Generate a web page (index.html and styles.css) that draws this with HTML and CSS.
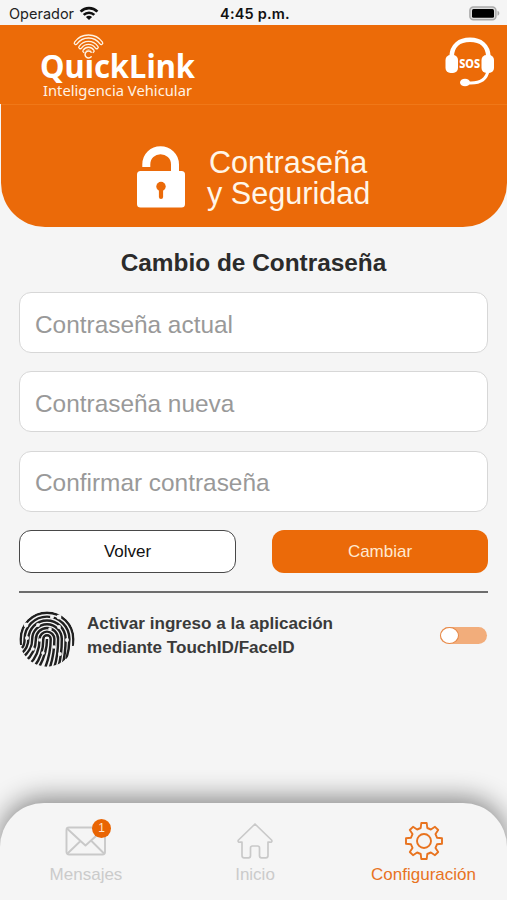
FILE: index.html
```html
<!DOCTYPE html>
<html lang="es">
<head>
<meta charset="utf-8">
<title>QuickLink</title>
<link rel="stylesheet" href="styles.css">
</head>
<body>
<div class="app">
  <div class="status">
    <div class="carrier"><span>Operador</span>
      <svg width="20" height="15" viewBox="0 0 20 15" fill="none" stroke="#111" stroke-width="2.7"><path d="M1.6 5.6C6.2 1 13.8 1 18.4 5.6M4.7 8.9c3-2.9 7.600-2.900 10.600 0"/><path d="M10 14 6.900 10.900c1.700-1.600 4.500-1.600 6.200 0z" fill="#111" stroke="none"/></svg>
    </div>
    <div class="time">4:45 p.m.</div>
    <svg class="battery" width="32" height="15" viewBox="0 0 32 15"><rect x=".9" y=".9" width="26" height="12.800" rx="3.500" fill="#ddd" stroke="#aaa" stroke-width="1.500"/><rect x="3" y="3" width="22" height="8.700" rx="1.500" fill="#000"/><path d="M28.500 4.800c2.400.8 2.400 4.200 0 5z" fill="#aaa"/></svg>
  </div>
  <header class="topbar">
    <svg class="logo" width="162" height="72" viewBox="0 0 162 72">
      <g fill="none" stroke-linecap="round">
        <path d="M36.800 12C43 3.300 56 3.300 62.200 12M41.300 16.200C45.500 10.500 53.500 10.500 57.700 16.200M45.400 20C47.500 17 51.500 17 53.600 20" stroke="#fff3e2" stroke-width="4.300"/>
        <path d="M36.800 12C43 3.300 56 3.300 62.200 12M41.300 16.200C45.500 10.500 53.500 10.500 57.700 16.200M45.400 20C47.500 17 51.500 17 53.600 20" stroke="#ec6b08" stroke-width="1.700"/>
        <circle cx="49.500" cy="23.500" r="4.600" fill="#ec6b08"/>
        <path d="M52.200 21.200a3.500 3.500 0 1 0 0 4.600" stroke="#fff3e2" stroke-width="1.500"/>
      </g>
      <text class="brand" x="1" y="47" textLength="155" lengthAdjust="spacingAndGlyphs">QuıckLink</text>
      <text class="tagline" x="4" y="64.500" textLength="149" lengthAdjust="spacingAndGlyphs">Inteligencia Vehicular</text>
    </svg>
    <svg class="sos" width="50" height="50" viewBox="0 0 50 50">
      <path d="M6.500 20C7 8 15 2.800 25 2.800S43 8 43.500 20" fill="none" stroke="#fff" stroke-width="4.600"/>
      <rect x=".5" y="18" width="12.500" height="18" rx="5" fill="#fff"/><rect x="36.500" y="18" width="12.500" height="18" rx="5" fill="#fff"/>
      <path d="M43 34c-1.500 8-8 12-17 12h-5" fill="none" stroke="#fff" stroke-width="3"/><ellipse cx="20" cy="45.500" rx="5" ry="3.800" fill="#fff"/>
      <text class="sos-text" x="14.200" y="30.500" textLength="21" lengthAdjust="spacingAndGlyphs">SOS</text>
    </svg>
  </header>
  <section class="hero">
    <svg width="48" height="62" viewBox="0 0 48 62">
      <path d="M9.300 21v-2.500C9.300 10 16 4.200 23.500 4.200S38 10 38 18.500V27" fill="none" stroke="#fff" stroke-width="8"/>
      <rect x="0" y="25" width="48" height="36.500" rx="3.500" fill="#fff"/>
      <circle cx="24" cy="40.500" r="4.700" fill="#eb6a09"/><path d="M24 41v10" stroke="#eb6a09" stroke-width="4.200" stroke-linecap="round"/>
    </svg>
    <h1><span>Contraseña</span><br>y Seguridad</h1>
  </section>
  <main>
    <h2>Cambio de Contraseña</h2>
    <div class="field">Contraseña actual</div>
    <div class="field">Contraseña nueva</div>
    <div class="field">Confirmar contraseña</div>
    <div class="buttons"><button class="btn back">Volver</button><button class="btn change">Cambiar</button></div>
    <div class="bio">
      <svg class="finger" width="56" height="56" viewBox="-28 -28 56 56">
        <defs><clipPath id="disc"><circle r="27.700"/></clipPath></defs>
        <g clip-path="url(#disc)" fill="none" stroke="#202020" stroke-width="2.450">
          <path d="M0 0C0 10-3 20-9 30"/>
          <path d="M-13 28C-6 19-3.700 10-3.700 0a3.700 3.700 0 0 1 7.400 0c0 12-2 20-6 30"/>
          <path d="M-18 26C-10 18-7.400 9-7.400 0a7.400 7.400 0 0 1 14.800 0c0 12-1.500 20-5 30"/>
          <path d="M-22 23C-13 15-11.100 8-11.100 0a11.100 11.100 0 0 1 22.200 0c0 12-1 20-4.300 30"/>
          <path d="M-25 19C-16 12-14.800 6-14.800 0a14.800 14.800 0 0 1 29.600 0c0 12-1 20-3.500 28"/>
          <path d="M-26 15C-19 9-18.600 4-18.600 0a18.600 18.600 0 0 1 37.200 0c0 10-1 18-3 26"/>
          <path d="M-25 9C-22.500 6-22.400 3-22.400 0a22.400 22.400 0 0 1 44.800 0c0 9-1 13-3 20"/>
          <path d="M-26.300 6V0a26.300 26.300 0 0 1 52.600 0v7"/>
        </g>
        <g fill="#f5f5f5"><circle cx="5" cy="-22" r="2"/><circle cx="12" cy="-22" r="2.400"/><circle cx="-21" cy="-14" r="2.400"/><circle cx="-9" cy="-14" r="1.900"/><circle cx="12" cy="-12" r="1.900"/><circle cx="3" cy="-10" r="1.800"/><circle cx="-20" cy="-1" r="2"/><circle cx="-7" cy="1" r="1.800"/><circle cx="20" cy="1" r="1.900"/><circle cx="7" cy="8" r="1.800"/><circle cx="-14" cy="10" r="1.800"/><circle cx="-4" cy="14" r="1.800"/><circle cx="13" cy="15" r="1.900"/></g>
      </svg>
      <p>Activar ingreso a la aplicación<br>mediante TouchID/FaceID</p>
      <div class="toggle"><i></i></div>
    </div>
  </main>
  <nav>
    <div class="tab">
      <div class="icon"><svg width="42" height="40" viewBox="0 0 42 40" fill="none" stroke="#c9c9c9" stroke-width="1.900" stroke-linejoin="round"><rect x="1.500" y="6.500" width="38.500" height="27" rx="2.500"/><path d="M2 7.500l13.500 12.500L20.500 24.500l5.500-5L39.500 7.500M2.500 32.500l13-12.500M39 32.500 26 19.500"/></svg><b class="badge">1</b></div>
      <span>Mensajes</span>
    </div>
    <div class="tab">
      <div class="icon"><svg width="42" height="40" viewBox="0 0 42 40" fill="none" stroke="#c9c9c9" stroke-width="1.700" stroke-linejoin="round"><path d="M21 3 4.500 19c-1 1.300.2 2.500 1.500 2.200h2V34.500q0 2.300 2 2.300h4.500q2 0 2-2V27q0-2 2-2h5q2 0 2 2v7.800q0 2 2 2H32q2 0 2-2.300V21.200h2c1.300.3 2.500-.9 1.500-2.200z"/></svg></div>
      <span>Inicio</span>
    </div>
    <div class="tab active">
      <div class="icon"><svg width="42" height="40" viewBox="-21 -20 42 40" fill="none" stroke="#e8731f" stroke-width="1.900" stroke-linejoin="round"><path d="M-3.300-13-2.700-18H2.700L3.300-13 6.900-11.500 11-14.200 14.200-11 11.500-6.900 13-3.300 18-2.700V2.700L13 3.300 11.500 6.900 14.200 11 11 14.200 6.900 11.500 3.300 13 2.700 18H-2.700L-3.300 13-6.900 11.500-11 14.200-14.200 11-11.500 6.900-13 3.300-18 2.700V-2.700L-13-3.300-11.500-6.900-14.200-11-11-14.200-6.900-11.500z"/><circle r="7"/></svg></div>
      <span>Configuración</span>
    </div>
  </nav>
</div>
</body>
</html>
```
FILE: styles.css
```css
* { box-sizing: border-box; }
body { margin: 0; background: #f5f5f5; font-family: "Liberation Sans", Arial, sans-serif; }
.app { width: 507px; height: 900px; display: flex; flex-direction: column; overflow: hidden; }
.status { height: 25px; display: grid; grid-template-columns: 1fr auto 1fr; align-items: center; padding: 2px 6px 0 9px; font: 14.5px Inter, sans-serif; color: #222; }
.carrier { display: flex; align-items: center; gap: 5px; }
.time { font-weight: 600; letter-spacing: .2px; color: #111; }
.battery { justify-self: end; }
.topbar { height: 79px; background: #ec6b08; display: flex; justify-content: space-between; padding: 6px 12px 0 39px; }
.sos { margin-top: 6px; }
.brand { font: 700 31.5px "Noto Sans", sans-serif; fill: #fff; }
.tagline { font: 14.5px "Noto Sans", sans-serif; fill: #fff3e4; }
.sos-text { font: 800 11.5px "Noto Sans", sans-serif; fill: #fff; }
.hero { height: 123px; margin-left: 1px; background: #eb6a09; border-radius: 0 0 44px 44px; border-top: 1px solid #f07818; display: flex; padding: 41px 0 0 136px; gap: 22px; }
h1 { margin: 1px 0 0; font-size: 30.6px; line-height: 31px; font-weight: 400; color: #fff6e8; }
h1 span { margin-left: 2px; }
main { flex: 1; padding: 22px 19px 0; }
h2 { margin: 0 0 15px; font-size: 24.4px; line-height: 28px; text-align: center; color: #2b2b2b; }
.field { height: 61px; margin-bottom: 18.3px; border: 1.5px solid #d7d7d7; border-radius: 12px; background: #fff; padding: 4px 15px 0; display: flex; align-items: center; font-size: 24.4px; color: #999; }
.buttons { display: flex; justify-content: space-between; }
.btn { width: 217px; height: 43px; border-radius: 12px; font: 17px "Liberation Sans", sans-serif; padding: 1px 0 0; }
.back { background: #fff; border: 1.5px solid #484848; color: #111; }
.change { width: 216px; background: #eb6a09; border: 0; color: #ffe9d0; }
.bio { border-top: 2px solid #6d6d6d; margin-top: 18px; padding-top: 18px; display: flex; align-items: flex-start; }
.bio p { margin: 1px 0 0 12px; font-weight: 700; font-size: 17.1px; line-height: 24.5px; color: #3a3a3a; flex: 1; }
.toggle { width: 47px; height: 17px; border-radius: 9px; background: #f2ad7b; margin: 16px 1px 0 0; }
.toggle i { display: block; width: 19px; height: 17px; border: 1.5px solid #e58644; border-radius: 50%; background: #fff; }
nav { height: 97px; background: #f5f5f5; border-radius: 44px 44px 0 0; box-shadow: 0 -5px 26px rgba(0,0,0,.46); display: grid; grid-template-columns: repeat(3, 169px); padding-top: 17px; }
.tab { display: flex; flex-direction: column; align-items: center; font-size: 17px; line-height: 20px; color: #cbcbcb; padding-left: 3px; }
.icon { position: relative; height: 45px; padding-top: 1px; }
.badge { position: absolute; right: -4px; top: -1px; width: 19px; height: 19px; border-radius: 50%; background: #e96504; color: #ffe6d0; font: 12px/19px "Liberation Sans", sans-serif; text-align: center; }
.active { color: #e8731f; padding-left: 2px; }
```
